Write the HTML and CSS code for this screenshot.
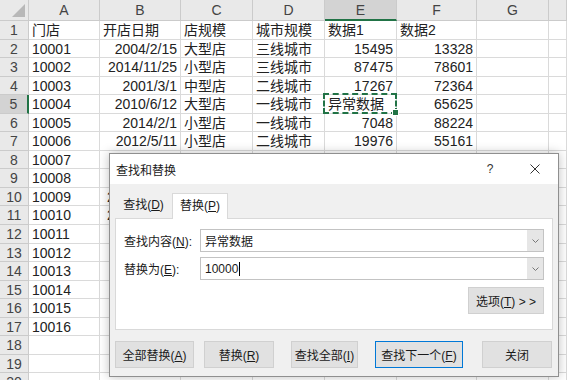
FILE: index.html
```html
<!DOCTYPE html>
<html lang="zh-CN">
<head>
    <meta charset="UTF-8">
    <title>查找和替换</title>
    <link rel="stylesheet" href="styles.css">
</head>
<body>
    <div class="sheet">
        <div class="row head"><span class="corner"></span><span>A</span><span>B</span><span>C</span><span>D</span><span class="sel">E</span><span>F</span><span>G</span><span></span></div>
        <div class="row"><span class="rh">1</span><span>门店</span><span>开店日期</span><span>店规模</span><span>城市规模</span><span>数据1</span><span>数据2</span><span></span><span></span></div>
        <div class="row"><span class="rh">2</span><span>10001</span><span class="r">2004/2/15</span><span>大型店</span><span>三线城市</span><span class="r">15495</span><span class="r">13328</span><span></span><span></span></div>
        <div class="row"><span class="rh">3</span><span>10002</span><span class="r">2014/11/25</span><span>小型店</span><span>三线城市</span><span class="r">87475</span><span class="r">78601</span><span></span><span></span></div>
        <div class="row"><span class="rh">4</span><span>10003</span><span class="r">2001/3/1</span><span>中型店</span><span>二线城市</span><span class="r">17267</span><span class="r">72364</span><span></span><span></span></div>
        <div class="row"><span class="rh sel">5</span><span>10004</span><span class="r">2010/6/12</span><span>大型店</span><span>一线城市</span><span class="mark">异常数据</span><span class="r">65625</span><span></span><span></span></div>
        <div class="row"><span class="rh">6</span><span>10005</span><span class="r">2014/2/1</span><span>小型店</span><span>一线城市</span><span class="r">7048</span><span class="r">88224</span><span></span><span></span></div>
        <div class="row"><span class="rh">7</span><span>10006</span><span class="r">2012/5/11</span><span>小型店</span><span>二线城市</span><span class="r">19976</span><span class="r">55161</span><span></span><span></span></div>
        <div class="row"><span class="rh">8</span><span>10007</span><span class="r">2013/4/8</span><span>小型店</span><span>三线城市</span><span>异常数据</span><span class="r">30752</span><span></span><span></span></div>
        <div class="row"><span class="rh">9</span><span>10008</span><span class="r">2011/7/3</span><span>中型店</span><span>二线城市</span><span class="r">46310</span><span class="r">21987</span><span></span><span></span></div>
        <div class="row"><span class="rh">10</span><span>10009</span><span class="r">2015/10/25</span><span>大型店</span><span>一线城市</span><span class="r">58214</span><span class="r">40633</span><span></span><span></span></div>
        <div class="row"><span class="rh">11</span><span>10010</span><span class="r">2016/12/19</span><span>小型店</span><span>三线城市</span><span class="r">33905</span><span class="r">69170</span><span></span><span></span></div>
        <div class="row"><span class="rh">12</span><span>10011</span><span></span><span></span><span></span><span></span><span></span><span></span><span></span></div>
        <div class="row"><span class="rh">13</span><span>10012</span><span></span><span></span><span></span><span></span><span></span><span></span><span></span></div>
        <div class="row"><span class="rh">14</span><span>10013</span><span></span><span></span><span></span><span></span><span></span><span></span><span></span></div>
        <div class="row"><span class="rh">15</span><span>10014</span><span></span><span></span><span></span><span></span><span></span><span></span><span></span></div>
        <div class="row"><span class="rh">16</span><span>10015</span><span></span><span></span><span></span><span></span><span></span><span></span><span></span></div>
        <div class="row"><span class="rh">17</span><span>10016</span><span></span><span></span><span></span><span></span><span></span><span></span><span></span></div>
        <div class="row"><span class="rh">18</span><span></span><span></span><span></span><span></span><span></span><span></span><span></span><span></span></div>
        <div class="row"><span class="rh">19</span><span></span><span></span><span></span><span></span><span></span><span></span><span></span><span></span></div>
        <div class="row"><span class="rh">20</span><span></span><span></span><span></span><span></span><span></span><span></span><span></span><span></span></div>
    </div>

    <div class="dialog">
        <div class="title">
            <span class="name">查找和替换</span>
            <span class="help">?</span>
            <span class="close">
                <svg width="10" height="10" viewBox="0 0 10 10"><path d="M0.5 0.5 L9.5 9.5 M9.5 0.5 L0.5 9.5" stroke="#333" stroke-width="1" fill="none"/></svg>
            </span>
        </div>
        <div class="body">
            <div class="tabs">
                <span class="tab">查找(<u>D</u>)</span>
                <span class="tab on">替换(<u>P</u>)</span>
            </div>
            <div class="panel">
                <div class="field">
                    <label>查找内容(<u>N</u>):</label>
                    <div class="combo">
                        <span class="val">异常数据</span>
                        <span class="drop"><svg width="7" height="4" viewBox="0 0 7 4"><path d="M0.5 0.5 L3.5 3.5 L6.5 0.5" stroke="#777" fill="none"/></svg></span>
                    </div>
                </div>
                <div class="field">
                    <label>替换为(<u>E</u>):</label>
                    <div class="combo">
                        <span class="val">10000<i class="caret"></i></span>
                        <span class="drop"><svg width="7" height="4" viewBox="0 0 7 4"><path d="M0.5 0.5 L3.5 3.5 L6.5 0.5" stroke="#777" fill="none"/></svg></span>
                    </div>
                </div>
                <div class="opts">
                    <button class="btn">选项(<u>T</u>) &gt; &gt;</button>
                </div>
            </div>
            <div class="actions">
                <button class="btn all">全部替换(<u>A</u>)</button>
                <button class="btn one">替换(<u>R</u>)</button>
                <button class="btn find">查找全部(<u>I</u>)</button>
                <button class="btn next">查找下一个(<u>F</u>)</button>
                <button class="btn shut">关闭</button>
            </div>
        </div>
    </div>
</body>
</html>
```

FILE: styles.css
```css
* {
    margin: 0;
    padding: 0;
    box-sizing: border-box;
}

body {
    font-family: "Liberation Sans", "Noto Sans CJK SC", sans-serif;
    font-size: 14px;
    color: #222;
    background: #fff;
    width: 567px;
    height: 380px;
    overflow: hidden;
    position: relative;
}

/* worksheet */
.row {
    display: grid;
    grid-template-columns: 29px 71px 81px 72px 72px 72px 80px 72px 18px;
    height: 18.56px;
}

.row span {
    border-right: 1px solid #dadada;
    border-bottom: 1px solid #dadada;
    padding: 1px 3px 0;
    line-height: 17px;
    white-space: nowrap;
    overflow: hidden;
}

.row .r {
    text-align: right;
}

.head {
    height: 21px;
}

.head span {
    background: #e9e9e9;
    color: #444;
    text-align: center;
    line-height: 20px;
    padding: 0;
    border-color: #cbcbcb;
}

.row .rh {
    background: #e9e9e9;
    color: #444;
    text-align: center;
    padding: 1px 0 0;
    border-color: #cbcbcb;
}

.row .sel {
    background: #d3d3d3;
}

.head .sel {
    border-bottom: 2px solid #217346;
}

.row .rh.sel {
    border-right: 2px solid #217346;
}

.head .corner {
    position: relative;
}

.corner::after {
    content: "";
    position: absolute;
    right: 3px;
    bottom: 3px;
    width: 13px;
    height: 13px;
    background: #b8b8b8;
    clip-path: polygon(100% 0, 100% 100%, 0 100%);
}

.row .mark {
    position: relative;
    overflow: visible;
}

.mark::after {
    content: "";
    position: absolute;
    left: -2px;
    top: -2px;
    right: -1px;
    bottom: -1px;
    border: 2px dashed #217346;
}

.mark::before {
    content: "";
    position: absolute;
    right: -3px;
    bottom: -3px;
    width: 5px;
    height: 5px;
    background: #217346;
    border: 1px solid #fff;
    z-index: 1;
}

/* dialog */
.dialog {
    position: absolute;
    left: 109px;
    top: 153px;
    width: 450px;
    height: 224px;
    background: #f0f0f0;
    border: 1px solid #8f8f8f;
    box-shadow: 0 0 10px rgba(0, 0, 0, 0.25);
    font-family: "Liberation Sans", "Noto Sans CJK SC", sans-serif;
    font-size: 12px;
    color: #1a1a1a;
}

.title {
    height: 30px;
    background: #fff;
    display: flex;
    align-items: center;
    padding-left: 6px;
}

.title .name {
    flex: 1;
}

.help {
    width: 30px;
    text-align: center;
    margin-right: 7px;
    color: #333;
}

.close {
    width: 46px;
    height: 30px;
    display: flex;
    align-items: center;
    justify-content: center;
}

.body {
    padding: 9px 5px 0;
}

.tabs {
    display: flex;
    align-items: flex-start;
    height: 25px;
}

.tab {
    width: 57px;
    height: 25px;
    line-height: 24px;
    text-align: center;
}

.tab.on {
    width: 56px;
    height: 26px;
    background: #fff;
    border: 1px solid #d9d9d9;
    border-bottom: 0;
    position: relative;
    z-index: 1;
}

.panel {
    background: #fff;
    border: 1px solid #d9d9d9;
    height: 112px;
    padding: 10px 8px 0;
}

.field {
    display: flex;
    align-items: center;
    height: 23px;
    margin-bottom: 5px;
}

.field label {
    width: 76px;
}

.combo {
    width: 344px;
    height: 23px;
    border: 1px solid #c3c3c3;
    display: flex;
    align-items: center;
    padding-left: 4px;
}

.combo .val {
    flex: 1;
    display: flex;
    align-items: center;
}

.caret {
    display: inline-block;
    width: 1px;
    height: 14px;
    background: #000;
    margin-left: 1px;
}

.drop {
    width: 16px;
    height: 21px;
    background: #e6e6e6;
    display: flex;
    align-items: center;
    justify-content: center;
}

.opts {
    display: flex;
    justify-content: flex-end;
    margin-top: 7px;
}

.btn {
    height: 27px;
    background: #e1e1e1;
    border: 1px solid #d0d0d0;
    font: inherit;
    color: inherit;
}

.opts .btn {
    width: 76px;
}

.actions {
    display: flex;
    gap: 17px;
    margin-top: 11px;
}

.all {
    width: 79px;
    margin-right: -7px;
}

.one {
    width: 70px;
}

.find {
    width: 67px;
}

.next {
    width: 88px;
    border-color: #0078d7;
}

.shut {
    width: 70px;
    margin-left: 2px;
}
```
